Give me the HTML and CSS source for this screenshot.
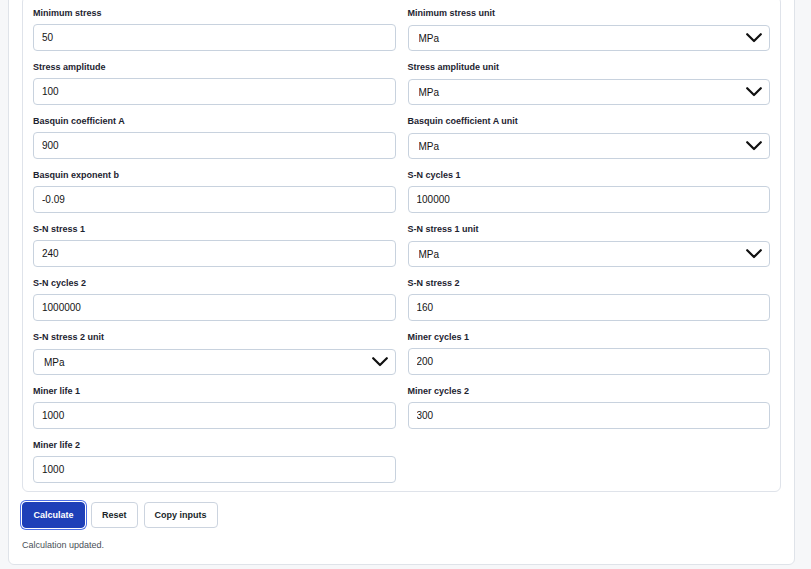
FILE: index.html
```html
<!DOCTYPE html>
<html lang="en">
<head>
<meta charset="utf-8">
<title>Fatigue calculator</title>
<link rel="stylesheet" href="styles.css">
</head>
<body>
<div class="page">
  <section class="card">
    <div class="fields">
      <div class="grid">
        <label class="field"><span class="label">Minimum stress</span><input class="control" type="text" value="50"></label>
        <label class="field"><span class="label">Minimum stress unit</span><span class="select-wrap"><select class="control select"><option>MPa</option></select><svg class="chev" viewBox="0 0 16 10" width="16" height="10"><path d="M1.2 1.2 L8 8 L14.8 1.2"/></svg></span></label>

        <label class="field"><span class="label">Stress amplitude</span><input class="control" type="text" value="100"></label>
        <label class="field"><span class="label">Stress amplitude unit</span><span class="select-wrap"><select class="control select"><option>MPa</option></select><svg class="chev" viewBox="0 0 16 10" width="16" height="10"><path d="M1.2 1.2 L8 8 L14.8 1.2"/></svg></span></label>

        <label class="field"><span class="label">Basquin coefficient A</span><input class="control" type="text" value="900"></label>
        <label class="field"><span class="label">Basquin coefficient A unit</span><span class="select-wrap"><select class="control select"><option>MPa</option></select><svg class="chev" viewBox="0 0 16 10" width="16" height="10"><path d="M1.2 1.2 L8 8 L14.8 1.2"/></svg></span></label>

        <label class="field"><span class="label">Basquin exponent b</span><input class="control" type="text" value="-0.09"></label>
        <label class="field"><span class="label">S-N cycles 1</span><input class="control" type="text" value="100000"></label>

        <label class="field"><span class="label">S-N stress 1</span><input class="control" type="text" value="240"></label>
        <label class="field"><span class="label">S-N stress 1 unit</span><span class="select-wrap"><select class="control select"><option>MPa</option></select><svg class="chev" viewBox="0 0 16 10" width="16" height="10"><path d="M1.2 1.2 L8 8 L14.8 1.2"/></svg></span></label>

        <label class="field"><span class="label">S-N cycles 2</span><input class="control" type="text" value="1000000"></label>
        <label class="field"><span class="label">S-N stress 2</span><input class="control" type="text" value="160"></label>

        <label class="field"><span class="label">S-N stress 2 unit</span><span class="select-wrap"><select class="control select"><option>MPa</option></select><svg class="chev" viewBox="0 0 16 10" width="16" height="10"><path d="M1.2 1.2 L8 8 L14.8 1.2"/></svg></span></label>
        <label class="field"><span class="label">Miner cycles 1</span><input class="control" type="text" value="200"></label>

        <label class="field"><span class="label">Miner life 1</span><input class="control" type="text" value="1000"></label>
        <label class="field"><span class="label">Miner cycles 2</span><input class="control" type="text" value="300"></label>

        <label class="field"><span class="label">Miner life 2</span><input class="control" type="text" value="1000"></label>
      </div>
    </div>
    <div class="actions">
      <button class="btn btn-primary" type="button">Calculate</button>
      <button class="btn" type="button">Reset</button>
      <button class="btn" type="button">Copy inputs</button>
    </div>
    <p class="status">Calculation updated.</p>
  </section>
</div>
</body>
</html>
```

FILE: styles.css
```css
* { box-sizing: border-box; }

html, body {
  margin: 0;
  background: #f6f7f9;
  font-family: "Liberation Sans", Arial, sans-serif;
  color: #1f2328;
}

.page {
  padding: 0 16px 0 8px;
}

.card {
  margin-top: -18px;
  background: #ffffff;
  border: 1px solid #dfe3e9;
  border-radius: 6px;
  padding: 13px 13px 13px 13px;
}

.fields {
  border: 1px solid #dfe3ea;
  border-radius: 6px;
  padding: 10px 10px 8px 10px;
}

.grid {
  display: grid;
  grid-template-columns: 1fr 1fr;
  column-gap: 12px;
  row-gap: 10px;
}

.field {
  display: flex;
  flex-direction: column;
}

.label {
  font-size: 9px;
  font-weight: bold;
  line-height: 12px;
  height: 12px;
  margin-bottom: 5px;
  color: #1d2330;
}

.control {
  height: 27px;
  width: 100%;
  border: 1px solid #c8d2de;
  border-radius: 4px;
  background: #ffffff;
  font-family: "Liberation Sans", Arial, sans-serif;
  font-size: 10px;
  color: #141414;
  padding: 0 8px;
  margin: 0;
  outline: none;
}

.select-wrap {
  position: relative;
  display: block;
  margin-top: 1px;
}

.select {
  -webkit-appearance: none;
  appearance: none;
  height: 26px;
  padding: 0 30px 0 10px;
}

.chev {
  position: absolute;
  right: 8px;
  top: 8px;
  pointer-events: none;
}

.chev path {
  fill: none;
  stroke: #111111;
  stroke-width: 2.2;
  stroke-linecap: round;
  stroke-linejoin: round;
}

.actions {
  display: flex;
  gap: 6px;
  margin-top: 10px;
}

.btn {
  height: 26px;
  padding: 0 10px;
  border: 1px solid #ccd4df;
  border-radius: 4px;
  background: #ffffff;
  color: #1a1f29;
  font-family: "Liberation Sans", Arial, sans-serif;
  font-size: 9px;
  font-weight: bold;
  cursor: pointer;
  margin: 0;
}

.btn-primary {
  background: #1e3fb8;
  border-color: #1e3fb8;
  color: #ffffff;
  width: 63px;
  box-shadow: 0 0 0 1px #ffffff, 0 0 0 2px #4c6ee6;
}

.status {
  margin: 11px 0 0 0;
  font-size: 9px;
  line-height: 12px;
  color: #4a4f57;
}
```
